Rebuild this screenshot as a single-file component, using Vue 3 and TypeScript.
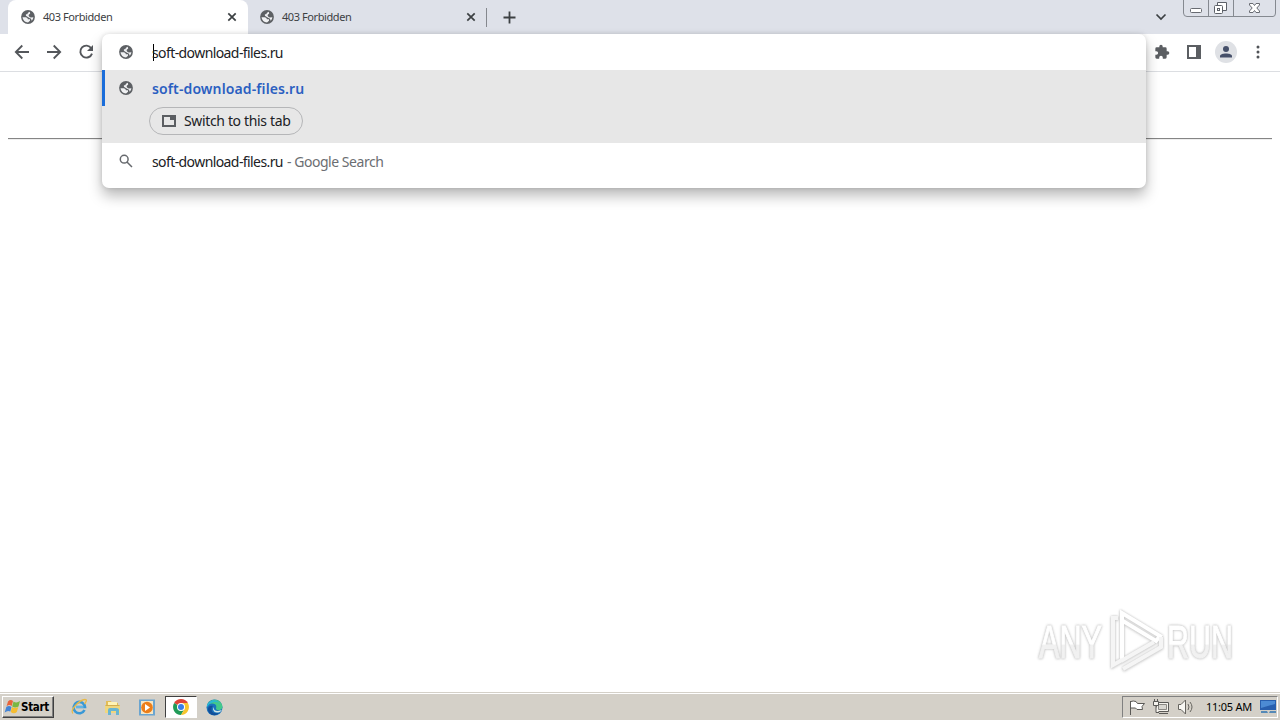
<script setup lang="ts">
import { h, type FunctionalComponent } from 'vue'

const Globe: FunctionalComponent = () =>
  h('svg', { width: 14, height: 14, viewBox: '0 0 14 14' }, [
    h('circle', { cx: 7, cy: 7, r: 6.9, fill: '#5d6064' }),
    h('path', {
      d: 'M1.500 7.300H4.900Q6.900 7.600 6.900 9.300H9V10.800L7 12.400Q2.200 12.200 1.500 7.300ZM4.900 5.700V4.300H6.200Q6.600 2.500 8.700 1.700L9.200 3.300Q9 4.200 7.900 4.400L7.600 5.800Q8.100 7.200 9.700 7.400L12.400 7.200Q12.100 9.600 10.700 10.800L10 8.700 7.200 7.300Z',
      fill: '#f0f1f3',
    }),
  ])

interface Tab { title: string; active: boolean }
const tabs: Tab[] = [
  { title: '403 Forbidden', active: true },
  { title: '403 Forbidden', active: false },
]
const address = 'soft-download-files.ru'
</script>

<template>
  <div class="screen">
    <header class="tabstrip">
      <div v-for="(tab, i) in tabs" :key="i" class="tab" :class="{ active: tab.active }">
        <Globe />
        <span class="tab-title">{{ tab.title }}</span>
        <svg class="close" width="10" height="10" viewBox="0 0 10 10"><path d="M1.3 1.3 8.7 8.7M8.7 1.3 1.3 8.7" stroke="#3c4043" stroke-width="1.7" /></svg>
      </div>
      <i class="separator"></i>
      <svg class="plus" width="13" height="13" viewBox="0 0 13 13"><path d="M6.5 .5V12.5M.5 6.5H12.5" stroke="#3c4043" stroke-width="1.8" /></svg>
      <svg class="chevron" width="12" height="8" viewBox="0 0 12 8"><path d="m1.5 1.5 4.5 4.5 4.5-4.5" fill="none" stroke="#3c4043" stroke-width="1.7" /></svg>
      <div class="window-buttons">
        <svg width="94" height="17" viewBox="0 0 94 17" fill="none">
          <path d="M.5 0V13Q.5 16.5 4 16.5H90Q92.5 16.5 92.5 13V0M25.5 0V16M50.5 0V16" stroke="#858990" />
          <rect x="7.5" y="8.5" width="11" height="4" rx="1" fill="#fff" stroke="#686b72" />
          <path d="M34.500 2.500H43.500V10.500H34.500Z" fill="#fff" stroke="#5c6068" />
          <rect x="31.500" y="5.500" width="8" height="8" rx="1" fill="#fff" stroke="#5c6068" />
          <rect x="34.500" y="8.500" width="2" height="2" stroke="#5c6068" />
          <path d="M66.500 3.500H70L71.500 5.500 73 3.500H76.500V5L73.800 8 76.500 11V12.500H73L71.500 10.500 70 12.500H66.500V11L69.200 8 66.500 5Z" fill="#fff" stroke="#686b72" />
        </svg>
      </div>
    </header>

    <nav class="toolbar">
      <svg width="16" height="16" viewBox="0 0 16 16" fill="none" stroke="#54575b" stroke-width="1.8"><path d="M15 8H2M8.300 1.500 1.800 8l6.500 6.500" /></svg>
      <svg width="16" height="16" viewBox="0 0 16 16" fill="none" stroke="#54575b" stroke-width="1.800"><path d="M1 8H14M7.700 1.500 14.200 8l-6.500 6.500" /></svg>
      <svg width="16" height="16" viewBox="0 0 16 16"><path d="M13.300 4.200A6 6 0 1 0 14 9.600" fill="none" stroke="#54575b" stroke-width="1.900" /><path d="M15 1V7H9Z" fill="#54575b" /></svg>
      <div class="toolbar-right">
        <svg width="16" height="16" viewBox="0 0 24 24"><path d="M20.500 11H19V7a2 2 0 0 0-2-2h-4V3.500a2.500 2.500 0 0 0-5 0V5H4a2 2 0 0 0-2 2v3.800h1.500a2.700 2.700 0 0 1 0 5.400H2V20a2 2 0 0 0 2 2h3.800v-1.500a2.700 2.700 0 0 1 5.400 0V22H17a2 2 0 0 0 2-2v-4h1.500a2.500 2.500 0 0 0 0-5Z" fill="#5b5e62" /></svg>
        <svg width="14" height="14" viewBox="0 0 14 14"><path d="M0 0H14V14H0ZM2 2V12H9V2Z" fill="#5b5e62" fill-rule="evenodd" /></svg>
        <svg width="22" height="22" viewBox="0 0 22 22"><circle cx="11" cy="11" r="11" fill="#dfe1e5" /><circle cx="11" cy="8" r="3" fill="#46506a" /><path d="M5 16.500V15C5 11.500 17 11.500 17 15V16.500Z" fill="#46506a" /></svg>
        <svg width="4" height="14" viewBox="0 0 4 14" fill="#505357"><circle cx="2" cy="2" r="1.500" /><circle cx="2" cy="7" r="1.500" /><circle cx="2" cy="12" r="1.500" /></svg>
      </div>
    </nav>

    <main class="page">
      <hr />
      <div class="watermark">
        <svg width="212" height="68" viewBox="0 0 212 68">
          <defs><linearGradient id="fade" x1="0" y1="0" x2="0" y2="1"><stop offset=".54" stop-color="#fff" /><stop offset=".56" stop-color="#f1f1f1" /></linearGradient></defs>
          <g class="mark-text" fill="url(#fade)" stroke="url(#fade)" stroke-width="1">
            <text x="5" y="50" textLength="63" lengthAdjust="spacingAndGlyphs">ANY</text>
            <text x="133" y="50" textLength="66" lengthAdjust="spacingAndGlyphs">RUN</text>
          </g>
          <g class="mark-play" fill="none" stroke="#fff" stroke-width="4">
            <path d="M88 51V5L126 28 122 33 89 13" />
            <path d="M84 10H79V57L88 52M89 61 127 39V29M87 53 120 34" stroke="#f5f5f5" />
          </g>
        </svg>
      </div>
    </main>

    <footer class="taskbar">
      <button class="start">
        <svg width="17" height="16" viewBox="0 0 17 16"><path d="M4 2.500Q6.500 0 9 2L7.700 7Q5 5 2.500 7.500Z" fill="#e8643b" /><path d="M9.500 2.500Q12.500 4.500 16 2L14.500 7.500Q11 9.500 8.200 7.500Z" fill="#79b743" /><path d="M2.300 8Q5 6 7.500 8L6.300 12.500Q3.500 11 .7 13.500Z" fill="#4384d6" /><path d="M8 8Q11 10 14.300 8L12.800 13Q10 15.500 6.700 13Z" fill="#f5bd32" /></svg>
        <span>Start</span>
      </button>
      <div class="apps">
        <span class="app"><svg width="18" height="18" viewBox="0 0 18 18" fill="none"><path d="M14.500 12A5.700 5.700 0 1 1 15 9H6" stroke="#3998d6" stroke-width="2.600" /><path d="M13.500 9H5.500" stroke="#8bd0f2" /><path d="M3 15.500C-1 13 9 2 15 1.500Q18 1.500 14.500 6" stroke="#e8b946" stroke-width="1.300" /></svg></span>
        <span class="app"><svg width="18" height="17" viewBox="0 0 18 17"><path d="M2 2H7L8 4H14V12H2Z" fill="#e3bd58" /><path d="M4 3H13V8H4Z" fill="#fff3b5" /><path d="M1 6H16V14H1Z" fill="#f0d77e" /><path d="M1.500 6.500H15.500" stroke="#d2ae50" /><path d="M4 16V11Q4 9 6 9H12Q15 9 15 11V16H12V12H7V16Z" fill="#68b5d2" /></svg></span>
        <span class="app"><svg width="18" height="17" viewBox="0 0 18 17"><path d="M1 .5H17V16.500H1Z" fill="#6ba5d0" /><path d="M3 2H15V15H3Z" fill="#f7e6c3" /><circle cx="9" cy="8.500" r="5.800" fill="#ec7e19" /><path d="m7 5 5 3.500L7 12Z" fill="#fff" /></svg></span>
        <span class="app selected"><svg width="16" height="16" viewBox="0 0 16 16"><path d="M8 8 1.100 4A8 8 0 0 1 14.900 4Z" fill="#df4437" /><path d="M8 8 1.100 4A8 8 0 0 0 8 16L11.500 10Z" fill="#219b58" /><path d="M8 4H14.900A8 8 0 0 1 8 16L11.500 10Z" fill="#f7c52e" /><circle cx="8" cy="8" r="4" fill="#fff" /><circle cx="8" cy="8" r="3" fill="#397ee7" /></svg></span>
        <span class="app last"><svg width="17" height="17" viewBox="0 0 17 17"><circle cx="8.500" cy="8.500" r="8" fill="#1973bd" /><path d="M1 7C3-2 16-1 16.500 8 16 12 10 12 10 9.500 12 4 4 3 1 7Z" fill="#43c98c" /><path d="M1 6C4 0 11 0 13 4 8 1 4 4 1 8Z" fill="#28b6d8" /><path d="M6 8C4 13 9 16 14 13 11 18 2 17 2 10 2 7 5 6 7 7Z" fill="#124f99" /><path d="M8 8Q7 12 12 12L16 11 14 13Q8 15 7 10Z" fill="#d4e7e6" /></svg></span>
      </div>
      <div class="tray">
        <svg width="17" height="17" viewBox="0 0 17 17" fill="#fff" stroke="#5a5956"><path d="M1.500 16V2M2 2.500Q4 1.500 7 2.500L8.500 4.500H15.500L13 7.500 13.500 10.500H8L6.500 9H2" /></svg>
        <svg width="17" height="16" viewBox="0 0 17 16" stroke="#5a5956" fill="#f5f3ed"><path d="M3.500 3.500H15.500V12.500H3.500ZM6 14.500H15" /><path d="M5.500 5.500H13.500V10.500H5.500Z" fill="#d8d6d0" stroke="#8b8984" /><path d="M.5 2.500H5.500V6.500H.5ZM1.500 0V3M4.500 0V3M3 7V13.500H6" /></svg>
        <svg width="18" height="16" viewBox="0 0 18 16" stroke="#66645f" fill="#f8f7f3"><path d="M1.500 5.500H4L8.500 1V15L4 10.500H1.500Z" /><path d="M11 5Q13 8 11 11M13 3Q17 8 13 13" fill="none" /></svg>
        <time>11:05 AM</time>
        <svg width="16" height="14" viewBox="0 0 16 14"><path d="M0 0H16V10H0Z" fill="#285fae" /><path d="M1 1H15V4L1 8Z" fill="#4c8bd4" /><path d="M1 11H7L8 13H1ZM10 11H16V13H9Z" fill="#5589b7" /></svg>
      </div>
    </footer>

    <section class="omnibox">
      <div class="row input-row"><Globe /><i class="caret"></i><span class="address">{{ address }}</span></div>
      <div class="match">
        <div class="row"><Globe /><strong>{{ address }}</strong></div>
        <button class="switch">
          <svg width="14" height="12" viewBox="0 0 14 12"><path d="M1 1H13V11H1Z" fill="none" stroke="#5b5e62" stroke-width="2" /><path d="M8 1H13V5H8Z" fill="#5b5e62" /></svg>
          <span>Switch to this tab</span>
        </button>
      </div>
      <div class="row search-row">
        <svg width="14" height="14" viewBox="0 0 14 14" fill="none" stroke="#66696d" stroke-width="1.500"><circle cx="5.200" cy="5.200" r="3.900" /><path d="m8 8 5 5" /></svg>
        <span class="address">{{ address }}</span><span class="suffix">- Google Search</span>
      </div>
    </section>
  </div>
</template>

<style>
html, body { margin: 0; overflow: hidden; }
</style>

<style scoped>
* { box-sizing: border-box; }
svg { display: block; flex: none; }
button { margin: 0; padding: 0; font: inherit; color: inherit; }
.screen { position: relative; width: 1280px; height: 720px; display: flex; flex-direction: column; background: #fff; color: #202124; font-family: "Noto Sans", "Open Sans", sans-serif; }
.tabstrip { height: 34px; display: flex; align-items: center; background: #dee1e9; padding-left: 8px; }
.tab { width: 239px; height: 34px; display: flex; align-items: center; padding: 0 11px 0 12px; color: #3c4043; }
.tab.active { width: 240px; padding-left: 13px; background: #fff; border-radius: 8px 8px 0 0; }
.tab-title { margin-left: 8px; padding-bottom: 2px; font-size: 11px; letter-spacing: -.42px; white-space: nowrap; }
.close { margin-left: auto; }
.separator { width: 1px; height: 19px; background: #85888e; margin-left: -1px; }
.plus { margin-left: 15.5px; }
.chevron { margin-left: auto; }
.window-buttons { align-self: flex-start; margin-left: 16px; width: 97px; }
.toolbar { height: 38px; flex: none; display: flex; align-items: center; gap: 16px; padding: 0 20px 2px 14px; border-bottom: 1px solid #dcdee2; }
.toolbar-right { display: flex; align-items: center; gap: 16px; margin-left: auto; }
.toolbar-right svg:nth-child(2) { margin-left: 1px; }
.toolbar-right svg:nth-child(3) { margin-left: -2px; }
.toolbar-right svg:nth-child(4) { margin-left: 3px; }
.page { flex: 1; display: flex; flex-direction: column; }
hr { width: 1264px; height: 2px; margin: 66px 8px 0; border: 0; border-top: 1px solid #858585; border-bottom: 1px solid #eee; }
.watermark { margin: auto 34px 16px auto; }
.watermark svg { overflow: visible; }
.mark-text { font: 46px "Liberation Sans", sans-serif; filter: drop-shadow(0 0 1px #c6c6c6) drop-shadow(0 0 1px #ddd); }
.mark-play { filter: drop-shadow(0 0 1px #c4c4c4) drop-shadow(0 1px 1px #ddd); }
.taskbar { height: 28px; flex: none; display: flex; align-items: flex-start; background: #d4d0c8; border-top: 1px solid #d4d0c8; box-shadow: inset 0 1px #fff; padding: 3px 2px 0 2px; }
.start { width: 52px; height: 22px; display: flex; align-items: center; padding-left: 1px; border: 1px solid; border-color: #fff #404040 #404040 #fff; background: #d4d0c8; box-shadow: inset -1px -1px #808080; color: #000; font: bold 11.5px "DejaVu Sans Condensed", "DejaVu Sans", sans-serif; letter-spacing: -.3px; }
.apps { display: flex; margin-left: 9px; gap: 2px; }
.app { width: 32px; height: 22px; display: flex; align-items: center; justify-content: center; }
.app.last { width: 31px; }
.selected { border: 1px solid; border-color: #404040 #fff #fff #404040; background: #fff; }
.tray { height: 22px; margin-left: auto; display: flex; align-items: center; border: 1px solid; border-color: #808080 #fff #fff #808080; width: 156px; padding-left: 6px; gap: 7px; }
time { color: #000; font: 11px "Noto Sans", sans-serif; letter-spacing: -.25px; width: 47px; white-space: nowrap; margin-left: 4px; padding-bottom: 1px; }
.omnibox { position: absolute; left: 102px; top: 34px; width: 1044px; height: 154px; background: #fff; border-radius: 7px; box-shadow: 0 8px 14px rgba(0,0,0,.27), 0 0 5px rgba(0,0,0,.13); font-size: 14px; letter-spacing: -.59px; }
.row { height: 36px; display: flex; align-items: center; padding-left: 17px; white-space: nowrap; }
.row > svg + span, .row > svg + strong { margin-left: 19px; }
.caret { width: 1px; height: 17px; background: #000; margin-left: 20px; margin-right: -2px; }
.match { height: 73px; background: linear-gradient(#1a6dda, #1a6dda) 0 0 / 3px 36px no-repeat #e7e7e7; }
strong { color: #2b5fc1; font-weight: 600; letter-spacing: .12px; }
.switch { width: 154px; height: 28px; margin-left: 47px; margin-top: 1px; border: 1px solid #b5b6b8; border-radius: 14px; background: transparent; display: flex; align-items: center; padding: 0 0 1px 12px; gap: 8px; letter-spacing: -.35px; white-space: nowrap; }
.search-row { height: 38px; padding-bottom: 2px; }
.suffix { color: #6b6e72; margin-left: 4px; letter-spacing: -.46px; }
</style>
